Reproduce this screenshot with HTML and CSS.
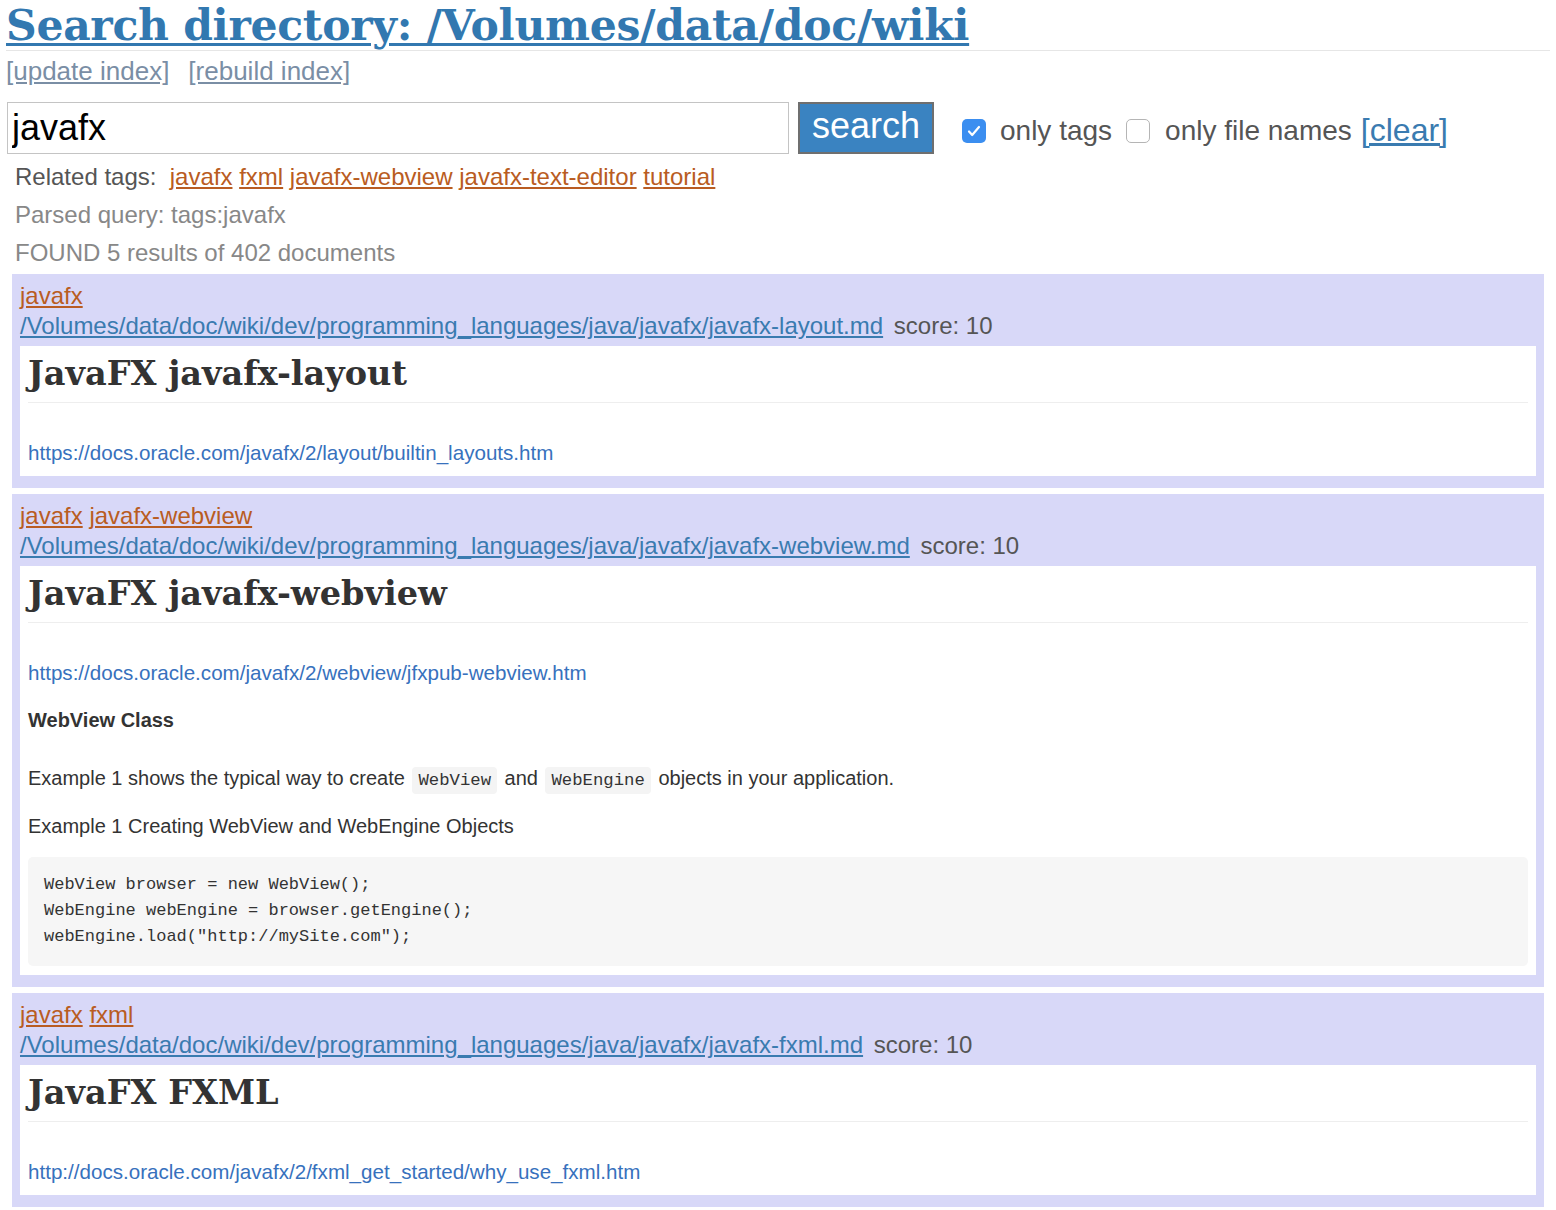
FILE: index.html
```html
<!DOCTYPE html>
<html>
<head>
<meta charset="utf-8">
<title>Search directory</title>
<link rel="stylesheet" href="styles.css">
</head>
<body>
<h1 class="page-title"><a href="#">Search directory: /Volumes/data/doc/wiki</a></h1>
<div class="actions">
  <a href="#">[update index]</a>
  <a href="#">[rebuild index]</a>
</div>
<form class="search-row">
  <input class="query" type="text" value="javafx">
  <button class="search-btn" type="button">search</button>
  <label class="opt"><span class="cb cb-on"><svg viewBox="0 0 24 24" width="24" height="24"><path d="M7 12.5l3.2 3.5L17 8" fill="none" stroke="#fff" stroke-width="2.2" stroke-linecap="round" stroke-linejoin="round"/></svg></span>only tags</label>
  <label class="opt"><span class="cb cb-off"></span>only file names</label>
  <a class="clear" href="#">[clear]</a>
</form>
<div class="info related">Related tags:&nbsp; <a class="tag" href="#">javafx</a> <a class="tag" href="#">fxml</a> <a class="tag" href="#">javafx-webview</a> <a class="tag" href="#">javafx-text-editor</a> <a class="tag" href="#">tutorial</a></div>
<div class="info muted">Parsed query: tags:javafx</div>
<div class="info muted">FOUND 5 results of 402 documents</div>

<div class="results">
  <div class="result">
    <div class="meta">
      <div><a class="tag" href="#">javafx</a></div>
      <div><a class="path" href="#">/Volumes/data/doc/wiki/dev/programming_languages/java/javafx/javafx-layout.md</a> <span class="score">score: 10</span></div>
    </div>
    <div class="doc">
      <h1>JavaFX javafx-layout</h1>
      <p><a href="#">https://docs.oracle.com/javafx/2/layout/builtin_layouts.htm</a></p>
    </div>
  </div>

  <div class="result">
    <div class="meta">
      <div><a class="tag" href="#">javafx</a> <a class="tag" href="#">javafx-webview</a></div>
      <div><a class="path" href="#">/Volumes/data/doc/wiki/dev/programming_languages/java/javafx/javafx-webview.md</a> <span class="score">score: 10</span></div>
    </div>
    <div class="doc">
      <h1>JavaFX javafx-webview</h1>
      <p><a href="#">https://docs.oracle.com/javafx/2/webview/jfxpub-webview.htm</a></p>
      <h4>WebView Class</h4>
      <p>Example 1 shows the typical way to create <code>WebView</code> and <code>WebEngine</code> objects in your application.</p>
      <p>Example 1 Creating WebView and WebEngine Objects</p>
<pre>WebView browser = new WebView();
WebEngine webEngine = browser.getEngine();
webEngine.load("http://mySite.com");</pre>
    </div>
  </div>

  <div class="result">
    <div class="meta">
      <div><a class="tag" href="#">javafx</a> <a class="tag" href="#">fxml</a></div>
      <div><a class="path" href="#">/Volumes/data/doc/wiki/dev/programming_languages/java/javafx/javafx-fxml.md</a> <span class="score">score: 10</span></div>
    </div>
    <div class="doc">
      <h1>JavaFX FXML</h1>
      <p><a href="#">http://docs.oracle.com/javafx/2/fxml_get_started/why_use_fxml.htm</a></p>
    </div>
  </div>
</div>
</body>
</html>
```
FILE: styles.css
```css
html, body {
  margin: 0;
  padding: 0;
  background: #fff;
}
body {
  padding: 0 6px;
  font-family: "Liberation Sans", Arial, sans-serif;
  color: #555;
}
a { color: #3a7bb0; }

.page-title {
  margin: 0;
  font-family: "DejaVu Serif", Georgia, serif;
  font-weight: bold;
  font-size: 42.5px;
  line-height: 50px;
  height: 50px;
  border-bottom: 1px solid #e6e6e6;
  white-space: nowrap;
  letter-spacing: -0.3px;
}
.page-title a { color: #3278b0; text-decoration-thickness: 3px; text-underline-offset: 3px; }

.actions {
  font-size: 26px;
  line-height: 30px;
  margin-top: 5px;
  display: flex;
  gap: 19px;
}
.actions a { color: #7a8ea5; }

.search-row {
  display: flex;
  align-items: center;
  margin: 15px 0 0 1px;
  height: 54px;
}
.query {
  box-sizing: border-box;
  width: 782px;
  height: 52px;
  border: 1px solid #c4c4c4;
  padding: 0 4px;
  font-family: "Liberation Sans", Arial, sans-serif;
  font-size: 36px;
  color: #000;
  margin: 0;
  outline: none;
}
.search-btn {
  box-sizing: border-box;
  margin: 0 0 0 9px;
  width: 136px;
  height: 52px;
  background: #3a83c1;
  border: 2px solid #6f6f6f;
  color: #fff;
  font-family: "Liberation Sans", Arial, sans-serif;
  font-size: 36px;
  padding: 0 0 4px;
}
.opt {
  display: flex;
  align-items: center;
  font-size: 28px;
  color: #555;
  padding-top: 6px;
}
.opt:first-of-type { margin-left: 28px; }
.opt + .opt { margin-left: 14px; }
.cb {
  box-sizing: border-box;
  width: 24px;
  height: 24px;
  border-radius: 5px;
  margin-right: 14px;
  display: inline-block;
}
.cb svg { display: block; }
.cb-on { background: #3b8ef0; }
.cb-off { border: 1px solid #b5b5b5; background: #fff; margin-right: 15px; }
.clear {
  font-size: 32px;
  margin-left: 9px;
  padding-top: 4px;
  color: #3a7bb0;
}

.info {
  font-size: 24px;
  line-height: 38px;
  padding-left: 9px;
}
.related { margin-top: 3px; color: #555; }
.muted { color: #888; }
.tag { color: #b95c22; }

.results {
  margin: 2px 6px 0;
  display: flex;
  flex-direction: column;
  gap: 6px;
}
.result {
  background: #d8d8f8;
  padding: 7px 8px 12px;
}
.meta {
  font-size: 24px;
  line-height: 30px;
  margin-bottom: 5px;
}
.path { color: #3a7bb0; }
.score { color: #555; margin-left: 4px; }

.doc {
  background: #fff;
  padding: 8px 8px 9px;
  color: #333;
  font-size: 20px;
}
.doc h1 {
  margin: 0 0 36px;
  font-family: "DejaVu Serif", Georgia, serif;
  font-weight: bold;
  font-size: 33.5px;
  line-height: 36px;
  padding: 2px 0 10px;
  border-bottom: 1px solid #eee;
  color: #333;
}
.doc p {
  margin: 0 0 20px;
  line-height: 28px;
}
.doc p:last-child { margin-bottom: 0; }
.doc p a { color: #3771bd; text-decoration: none; font-size: 20.6px; }
.doc h4 {
  margin: -1px 0 30px;
  font-size: 20px;
  line-height: 28px;
  color: #333;
}
.doc code {
  font-family: "Liberation Mono", "DejaVu Sans Mono", monospace;
  font-size: 17.3px;
  line-height: 1;
  background: #f4f4f4;
  border-radius: 4px;
  padding: 4px 6px;
  margin: 0 2px;
}
.doc pre {
  margin: -3px 0 0;
  background: #f6f6f6;
  border-radius: 5px;
  padding: 15px 16px 16px;
  font-family: "Liberation Mono", "DejaVu Sans Mono", monospace;
  font-size: 17px;
  line-height: 26px;
  color: #333;
}
```
